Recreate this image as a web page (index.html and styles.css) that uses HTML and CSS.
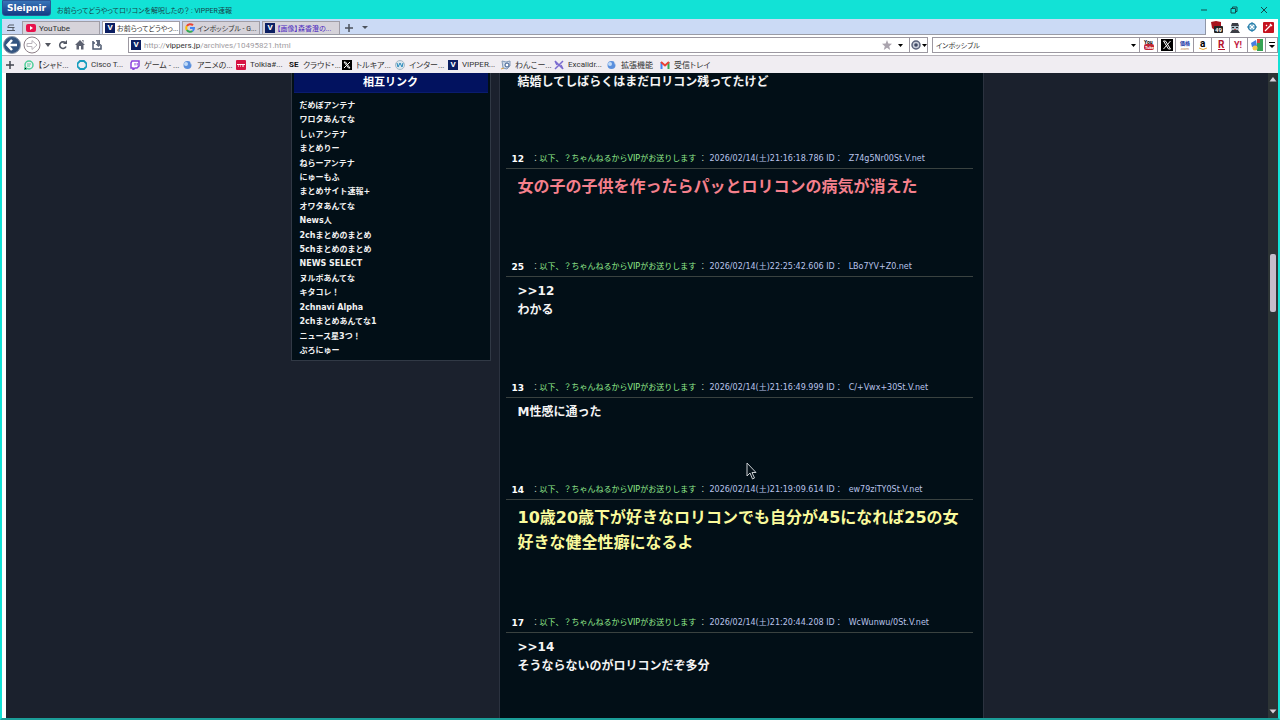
FILE: index.html
```html
<!DOCTYPE html>
<html lang="ja">
<head>
  <meta charset="UTF-8" />
  <meta name="viewport" content="width=device-width, initial-scale=1.0"/>
  <title>お前らってどうやってロリコンを解呪したの？ : VIPPER速報</title>
  <link rel="stylesheet" href="styles.css">
</head>
<body>

<div class="window">
  <header class="titlebar">
    <button class="brand">Sleipnir</button>
    <span class="window-title">お前らってどうやってロリコンを解呪したの？ : VIPPER速報</span>
    <div class="window-buttons">
      <button aria-label="最小化"><svg width="10" height="10" viewBox="0 0 10 10"><path d="M2 5h6"/></svg></button>
      <button aria-label="元に戻す"><svg width="10" height="10" viewBox="0 0 10 10"><path d="M2 3.5h4.500v4.500H2zM3.500 3.500V2H8v4.500H6.500"/></svg></button>
      <button aria-label="閉じる"><svg width="10" height="10" viewBox="0 0 10 10"><path d="M2 2l6 6M8 2l-6 6"/></svg></button>
    </div>
  </header>

  <div class="tabbar">
    <nav class="tabs">
      <button class="tab-list" aria-label="タブ一覧"><svg width="10" height="10" viewBox="0 0 10 10"><path d="M3 2h5M2 4.500h6.500M1 7.500h8M3 2L1.500 4.500M7 4.500v3" stroke="#555b66" fill="none"/></svg></button>
      <button class="tab">
        <svg width="12" height="10" viewBox="0 0 12 10"><rect x="1" y="1" width="10" height="8" rx="2" fill="#e8114b"/><path d="M5 3l3 2-3 2z" fill="#fff"/></svg>
        <span class="latin">YouTube</span>
      </button>
      <button class="tab active"><i class="v-icon">V</i><span>お前らってどうやっ...</span></button>
      <button class="tab">
        <svg width="10" height="10" viewBox="0 0 10 10" fill="none" stroke-width="2"><path d="M8 2.300A4 4 0 0 0 1.800 3" stroke="#ea4335"/><path d="M1.800 3a4 4 0 0 0 0 4" stroke="#fbbc05"/><path d="M1.800 7A4 4 0 0 0 7.500 8" stroke="#34a853"/><path d="M7.500 8A4 4 0 0 0 9 5H5" stroke="#4285f4"/></svg>
        <span>インポッシブル - G...</span>
      </button>
      <button class="tab unread"><i class="v-icon">V</i><span>【画像】森香澄の...</span></button>
      <button class="tab-new" aria-label="新しいタブ"><svg width="10" height="10" viewBox="0 0 10 10"><path d="M5 1v8M1 5h8" stroke="#4c525c" stroke-width="1.500"/></svg></button>
      <button class="tab-menu" aria-label="タブメニュー"><svg width="6" height="4" viewBox="0 0 6 4"><path d="M0 0h6L3 3z" fill="#4c525c"/></svg></button>
    </nav>
    <div class="extensions">
      <button aria-label="ブロッカー"><svg width="14" height="14" viewBox="0 0 14 14"><path d="M1 2l5-1 5 1v5L6 11 2 8z" fill="#a8121d"/><rect x="4" y="6" width="9" height="7" rx="1" fill="#222"/><text x="5" y="12" font-size="6" font-weight="bold" fill="#fff">49</text></svg></button>
      <button aria-label="エージェント"><svg width="10" height="11" viewBox="0 0 10 11"><path d="M2 1h6l1 3H1z" fill="#3b3e45"/><path d="M1 4h8v3L7 9H3L1 7z" fill="#a9bcc6"/><path d="M2 5h2v1H2zM6 5h2v1H6z" fill="#222"/><path d="M4 7h2v1H4z" fill="#c74949"/><path d="M0 11l2-3h6l2 3z" fill="#3b3e45"/></svg></button>
      <button aria-label="ターゲット"><svg width="10" height="10" viewBox="0 0 10 10"><circle cx="5" cy="5" r="3.500" fill="none" stroke="#2e83ad" stroke-width="1.500"/><path d="M5 0v4M5 6v4M0 5h4M6 5h4" stroke="#2e83ad"/></svg></button>
      <button aria-label="ツール"><svg width="11" height="11" viewBox="0 0 11 11"><rect width="11" height="11" rx="1" fill="#c5131f"/><path d="M2 9l6-6M7 2l2 2M3 3l1 1" stroke="#fff" stroke-width="1.300"/></svg></button>
    </div>
  </div>

  <div class="toolbar">
    <div class="nav-buttons">
      <button aria-label="戻る"><svg width="18" height="18" viewBox="0 0 18 18"><circle cx="9" cy="9" r="8.500" fill="#345580" stroke="#8f9bad"/><path d="M9 4L4.500 9 9 14M5 9h9" stroke="#fff" stroke-width="2.500" fill="none"/></svg></button>
      <button aria-label="進む"><svg width="18" height="18" viewBox="0 0 18 18"><circle cx="9" cy="9" r="8" fill="#fff" stroke="#8d7f88"/><path d="M4 7.500h5V4.500l5 4.500-5 4.500v-3H4z" fill="#fff" stroke="#b9b3bb"/></svg></button>
      <button class="history" aria-label="履歴"><svg width="6" height="4" viewBox="0 0 6 4"><path d="M0 0h6L3 4z" fill="#53565f"/></svg></button>
      <button class="tool" aria-label="更新"><svg width="10" height="10" viewBox="0 0 10 10"><path d="M7.500 3A3.300 3.300 0 1 0 8 6.500" fill="none" stroke="#555a66" stroke-width="1.600"/><path d="M5 4h4V0z" fill="#555a66"/></svg></button>
      <button class="tool" aria-label="ホーム"><svg width="10" height="10" viewBox="0 0 10 10"><path d="M5 0l5 5H8.500v4.500H6V6H4v3.500H1.500V5H0zM7 0h1.500v3z" fill="#5c6170"/></svg></button>
      <button class="tool" aria-label="保存"><svg width="10" height="10" viewBox="0 0 10 10"><path d="M1 1v8h8V5M1 3h2" fill="none" stroke="#4e5a70" stroke-width="1.500"/><path d="M4 0h4v4h1.500L6.500 7 3.500 4H5V1.500H4z" fill="#5f687b"/></svg></button>
    </div>
    <div class="address">
      <i class="v-icon">V</i>
      <a class="url" href="#">http://<b>vippers.jp</b>/archives/10495821.html</a>
      <button aria-label="ブックマーク"><svg width="10" height="10" viewBox="0 0 10 10"><path d="M5 0l1.300 3.500L10 3.800 7.200 6.200 8.200 10 5 7.800 1.800 10l1-3.800L0 3.800l3.700-.3z" fill="#aaa4ae"/></svg></button>
      <button aria-label="履歴を表示"><svg width="5" height="3" viewBox="0 0 5 3"><path d="M0 0h5L2.500 3z"/></svg></button>
      <button class="engine" aria-label="エンジン切替"><svg width="16" height="10" viewBox="0 0 16 10"><circle cx="5" cy="5" r="4" fill="#c9ced9" stroke="#59617a" stroke-width="1.500"/><circle cx="5" cy="5" r="1.800" fill="#3f4964"/><path d="M11 4h5l-2.500 3z"/></svg></button>
    </div>
    <div class="search">
      <input type="text" aria-label="検索" value="インポッシブル">
      <button aria-label="検索履歴"><svg width="5" height="3" viewBox="0 0 5 3"><path d="M0 0h5L2.500 3z"/></svg></button>
    </div>
    <div class="engines">
      <button aria-label="YouTube検索"><svg width="12" height="12" viewBox="0 0 12 12"><text x="1" y="5" font-size="5" font-weight="bold">You</text><rect x="1" y="5" width="10" height="6" rx="2" fill="#c32634"/><text x="2" y="10" font-size="4" font-weight="bold" fill="#fff">Tube</text></svg></button>
      <button aria-label="X検索"><svg width="12" height="12" viewBox="0 0 12 12"><rect width="12" height="12"/><path d="M2.500 2h2l5 8h-2zM9.500 2l-7 8" fill="none" stroke="#fff"/></svg></button>
      <button aria-label="価格.com検索"><svg width="12" height="12" viewBox="0 0 12 12"><text x="1" y="6" font-size="5" font-weight="bold" fill="#1b35a5">価格</text><text x="1" y="11" font-size="4" fill="#c07d45">.com</text></svg></button>
      <button aria-label="Amazon検索"><svg width="12" height="12" viewBox="0 0 12 12"><text x="3" y="8" font-size="10" font-weight="bold">a</text><path d="M2 9q4 3 8 0" fill="none" stroke="#e8a735"/></svg></button>
      <button aria-label="楽天検索"><svg width="12" height="12" viewBox="0 0 12 12"><text x="3" y="9" font-size="10" font-weight="bold" fill="#b4132d">R</text><path d="M3 10.500h7" stroke="#b4132d"/></svg></button>
      <button aria-label="Yahoo検索"><svg width="12" height="12" viewBox="0 0 12 12"><text x="1" y="9" font-size="9" font-weight="bold" fill="#c21940">Y!</text></svg></button>
      <button aria-label="Googleマップ検索"><svg width="12" height="12" viewBox="0 0 12 12"><path d="M6 0h6v12H6z" fill="#36a354"/><path d="M0 4l5-3 1 6-5 1z" fill="#477ee0"/><path d="M6 0h3v4H6z" fill="#d8463c"/><circle cx="4" cy="9" r="2.500" fill="#f1c84b"/></svg></button>
      <button class="more" aria-label="その他"><svg width="6" height="7" viewBox="0 0 6 7"><path d="M0 0h6v1H0zM0 3h6L3 6z"/></svg></button>
    </div>
  </div>

  <nav class="bookmarks">
    <button aria-label="追加"><svg width="10" height="10" viewBox="0 0 10 10"><path d="M5 1v8M1 5h8" stroke="#42464f" stroke-width="1.500"/></svg></button>
    <a href="#"><svg width="10" height="10" viewBox="0 0 10 10"><circle cx="5" cy="5" r="4" fill="none" stroke="#4dcf99" stroke-width="1.500"/><path d="M3 4h4M3 6h3M0 10l1-3 2 2z" stroke="#4dcf99"/></svg>【シャド...</a>
    <a href="#"><svg width="10" height="10" viewBox="0 0 10 10"><path d="M3 1h4l2.500 2.500v3L7 9H3L.5 6.500v-3z" fill="none" stroke="#179dbe" stroke-width="1.800"/></svg>Cisco T...</a>
    <a href="#"><svg width="10" height="10" viewBox="0 0 10 10"><path d="M2 1h7v5L7 8H5L3 10V8H1V3z" fill="#fff" stroke="#8d45dd" stroke-width="1.500"/><path d="M5 3v2.500M7.200 3v2.500" stroke="#8d45dd"/></svg>ゲーム - ...</a>
    <a href="#"><svg width="10" height="10" viewBox="0 0 10 10"><circle cx="4.500" cy="5" r="4" fill="#5a8fdd"/><circle cx="3" cy="4" r="2" fill="#c2dbf7"/><path d="M7 1l2 2-1 2z" fill="#eee"/></svg>アニメの...</a>
    <a href="#"><svg width="10" height="10" viewBox="0 0 10 10"><rect width="10" height="10" rx="1" fill="#d61443"/><path d="M1 4.500h8M2 6h1M4 6h1M6 6h2" stroke="#fff"/></svg>Tolkia#...</a>
    <a href="#"><b class="se-icon">SE</b>クラウド・...</a>
    <a href="#"><svg width="10" height="10" viewBox="0 0 10 10"><rect width="10" height="10"/><path d="M2 2h1.500l4.500 6H6.500zM8 2L2 8" fill="none" stroke="#fff"/></svg>トルキア...</a>
    <a href="#"><svg width="10" height="10" viewBox="0 0 10 10"><circle cx="5" cy="5" r="4.500" fill="#d8e6ee" stroke="#a8b9c5"/><path d="M2 3l1 4 2-4 2 4 1-4" fill="none" stroke="#2889bb"/></svg>インター...</a>
    <a href="#"><i class="v-icon">V</i>VIPPER...</a>
    <a href="#"><svg width="10" height="10" viewBox="0 0 10 10"><path d="M1 1l4 1 4-1v5L6 9 2 8z" fill="#ccd9e9" stroke="#839ab8"/><circle cx="6" cy="5" r="2" fill="#fff" stroke="#38588d"/><path d="M0 9l3-1" stroke="#dba34a"/></svg>わんこー...</a>
    <a href="#"><svg width="10" height="10" viewBox="0 0 10 10"><path d="M1 1l8 8M9 1L1 9M1 1l2 4M9 9L7 5" stroke="#7a6bd0" stroke-width="1.500"/></svg>Excalidr...</a>
    <a href="#"><svg width="10" height="10" viewBox="0 0 10 10"><circle cx="4.500" cy="5" r="4" fill="#5a8fdd"/><circle cx="3" cy="4" r="2" fill="#c2dbf7"/><path d="M7 1l2 2-1 2z" fill="#eee"/></svg>拡張機能</a>
    <a href="#"><svg width="10" height="10" viewBox="0 0 10 10" fill="none" stroke-width="2"><path d="M1.500 9V2" stroke="#4285f4"/><path d="M8.500 9V2" stroke="#34a853"/><path d="M1 2l4 3.500L9 2" stroke="#ea4335"/></svg>受信トレイ</a>
  </nav>

  <div class="viewport">
    <div class="page">
      <aside class="sidebar">
        <h2>相互リンク</h2>
        <ul>
          <li><a href="#">だめぽアンテナ</a></li>
          <li><a href="#">ワロタあんてな</a></li>
          <li><a href="#">しぃアンテナ</a></li>
          <li><a href="#">まとめりー</a></li>
          <li><a href="#">ねらーアンテナ</a></li>
          <li><a href="#">にゅーもふ</a></li>
          <li><a href="#">まとめサイト速報+</a></li>
          <li><a href="#">オワタあんてな</a></li>
          <li><a href="#">News人</a></li>
          <li><a href="#">2chまとめのまとめ</a></li>
          <li><a href="#">5chまとめのまとめ</a></li>
          <li><a href="#">NEWS SELECT</a></li>
          <li><a href="#">ヌルポあんてな</a></li>
          <li><a href="#">キタコレ！</a></li>
          <li><a href="#">2chnavi Alpha</a></li>
          <li><a href="#">2chまとめあんてな1</a></li>
          <li><a href="#">ニュース星3つ！</a></li>
          <li><a href="#">ぷろにゅー</a></li>
        </ul>
      </aside>

      <main class="thread">
        <article class="post">
          <p>結婚してしばらくはまだロリコン残ってたけど</p>
        </article>
        <article class="post">
          <div class="meta"><b>12</b><span class="name">：<em>以下、？ちゃんねるからVIPがお送りします</em> ：</span><span>2026/02/14(土)21:16:18.786 ID：</span><span class="id">Z74g5Nr00St.V.net</span></div>
          <p class="big red">女の子の子供を作ったらパッとロリコンの病気が消えた</p>
        </article>
        <article class="post">
          <div class="meta"><b>25</b><span class="name">：<em>以下、？ちゃんねるからVIPがお送りします</em> ：</span><span>2026/02/14(土)22:25:42.606 ID：</span><span class="id">LBo7YV+Z0.net</span></div>
          <p>&gt;&gt;12<br>わかる</p>
        </article>
        <article class="post">
          <div class="meta"><b>13</b><span class="name">：<em>以下、？ちゃんねるからVIPがお送りします</em> ：</span><span>2026/02/14(土)21:16:49.999 ID：</span><span class="id">C/+Vwx+30St.V.net</span></div>
          <p>M性感に通った</p>
        </article>
        <article class="post">
          <div class="meta"><b>14</b><span class="name">：<em>以下、？ちゃんねるからVIPがお送りします</em> ：</span><span>2026/02/14(土)21:19:09.614 ID：</span><span class="id">ew79ziTY0St.V.net</span></div>
          <p class="big yellow">10歳20歳下が好きなロリコンでも自分が45になれば25の女<br>好きな健全性癖になるよ</p>
        </article>
        <article class="post">
          <div class="meta"><b>17</b><span class="name">：<em>以下、？ちゃんねるからVIPがお送りします</em> ：</span><span>2026/02/14(土)21:20:44.208 ID：</span><span class="id">WcWunwu/0St.V.net</span></div>
          <p>&gt;&gt;14<br>そうならないのがロリコンだぞ多分</p>
        </article>
      </main>
    </div>

    <div class="scrollbar">
      <svg width="8" height="5" viewBox="0 0 8 5"><path d="M4 0l3.500 4.500h-7z"/></svg>
      <div class="thumb"></div>
      <svg width="8" height="5" viewBox="0 0 8 5"><path d="M4 4.500L.5.500h7z"/></svg>
    </div>
  </div>

  <svg class="cursor" width="12" height="18" viewBox="0 0 12 18"><path d="M1 1v13l3-3 2.500 6 2-1L6 10.500h4z" fill="#06121a" stroke="#c9cdd1"/></svg>
</div>

</body>
</html>
```
FILE: styles.css
```css
* {
  box-sizing: border-box;
}

body {
  margin: 0;
  font-family: Roboto, 'Noto Sans CJK JP', sans-serif;
  font-size: 8px;
  color: #333;
}

button {
  display: flex;
  align-items: center;
  justify-content: center;
  padding: 0;
  border: none;
  background: none;
  font: inherit;
  color: inherit;
}

a {
  color: inherit;
  text-decoration: none;
}

svg {
  display: block;
  flex: none;
}

.window {
  display: flex;
  flex-direction: column;
  height: 100vh;
  overflow: hidden;
  border: 2px solid #12e2d6;
  border-top: none;
  border-bottom-color: #1b9d98;
  background: #fff;
}

/* title bar */
.titlebar {
  display: flex;
  align-items: center;
  gap: 6px;
  height: 19px;
  background: #12e2d6;
}

.brand {
  width: 49px;
  height: 16px;
  align-self: flex-start;
  border: 1px solid #2a5596;
  border-radius: 0 0 3px 3px;
  background: linear-gradient(#3874b8, #123c85);
  color: #fff;
  font-family: 'DejaVu Sans', sans-serif;
  font-size: 9px;
  font-weight: bold;
}

.window-title {
  color: #17424a;
  font-size: 7px;
  font-feature-settings: "palt";
}

.window-buttons {
  display: flex;
  gap: 20px;
  margin-left: auto;
  margin-right: 9px;
}

.window-buttons path {
  fill: none;
  stroke: #134b4d;
}

/* tabs */
.tabbar {
  display: flex;
  height: 16px;
}

.tabs {
  flex: 1;
  display: flex;
  align-items: flex-end;
  gap: 2px;
  background: #cbdaf5;
  border-right: 1px solid #8e96a8;
  border-bottom: 1px solid #9a9ca6;
}

.tab-list {
  width: 18px;
  height: 13px;
}

.tab {
  width: 78px;
  height: 13px;
  justify-content: flex-start;
  gap: 2px;
  padding: 0 2px;
  white-space: nowrap;
  border: 1px solid #a09da6;
  border-bottom: none;
  background: #d6d3da;
  font-size: 7px;
  font-feature-settings: "palt";
}

.tab.active {
  background: #fff;
}

.tab.unread {
  color: #4a27c0;
}

.tab .latin {
  font-size: 8px;
}

.tab-new,
.tab-menu {
  width: 14px;
  height: 13px;
}

.v-icon {
  flex: none;
  width: 10px;
  height: 10px;
  background: #0c1f62;
  color: #fff;
  font-size: 8px;
  font-style: normal;
  font-weight: bold;
  line-height: 10px;
  text-align: center;
}

.extensions {
  display: flex;
  align-items: center;
  justify-content: space-between;
  width: 72px;
  padding: 0 4px;
}

/* toolbar */
.toolbar {
  display: flex;
  align-items: center;
  height: 20px;
}

.nav-buttons {
  display: flex;
  align-items: center;
  gap: 2px;
  width: 126px;
  padding-left: 1px;
}

.history {
  width: 10px;
}

.tool {
  width: 15px;
}

.address,
.search {
  display: flex;
  align-items: center;
  height: 16px;
  border: 1px solid #9c98a1;
}

.address {
  flex: 1;
  gap: 6px;
  padding-left: 2px;
  margin-right: 4px;
}

.address .url {
  flex: 1;
  margin-left: -3px;
  color: #a09ca2;
}

.url b {
  color: #333;
  font-weight: normal;
}

.engine {
  width: 18px;
  height: 14px;
  border-left: 1px solid #9c98a1;
}

.search {
  width: 208px;
  padding-right: 3px;
}

.search input {
  flex: 1;
  min-width: 0;
  padding: 0 3px;
  border: none;
  outline: none;
  background: none;
  font: inherit;
  font-size: 7px;
  font-feature-settings: "palt";
  color: #333;
}

.engines {
  display: flex;
}

.engines button {
  width: 18px;
  height: 16px;
  border: 1px solid #9c98a1;
  border-left: none;
}

.engines .more {
  width: 12px;
}

/* bookmarks */
.bookmarks {
  display: flex;
  align-items: center;
  height: 18px;
  padding-left: 3px;
  border-top: 1px solid #b5b1b9;
  background: #f0edf2;
  font-feature-settings: "palt";
}

.bookmarks button {
  width: 19px;
  justify-content: flex-start;
}

.bookmarks a {
  display: flex;
  align-items: center;
  gap: 4px;
  width: 53px;
  white-space: nowrap;
}

.se-icon {
  width: 10px;
  color: #111;
}

/* page */
.viewport {
  flex: 1;
  display: flex;
  min-height: 0;
  margin-left: 4px;
  background: #1b212d;
  font-family: 'DejaVu Sans', 'Noto Sans CJK JP', sans-serif;
}

.page {
  flex: 1;
  display: flex;
  align-items: flex-start;
  justify-content: center;
  gap: 8px;
  overflow: hidden;
}

.sidebar {
  width: 200px;
  padding: 0 2px 2px;
  border: 1px solid #313945;
  border-top: none;
  background: #020f17;
  color: #f2f2f2;
  font-weight: bold;
}

.sidebar h2 {
  margin: 0;
  border-bottom: 1px solid #0a1c6e;
  background: #02125f;
  color: #fff;
  font-size: 11px;
  line-height: 19px;
  text-align: center;
}

.sidebar ul {
  display: flex;
  flex-direction: column;
  justify-content: space-between;
  height: 259px;
  margin: 6px 0 0;
  padding: 0 6px;
  list-style: none;
  line-height: 14px;
}

.thread {
  width: 485px;
  height: 100%;
  padding: 0 10px 0 6px;
  border: 1px solid #2b323f;
  border-width: 0 1px;
  background: #020f17;
}

.post {
  margin-bottom: 60px;
}

.meta {
  display: flex;
  height: 17px;
  padding-left: 6px;
  border-bottom: 1px solid #3a4240;
  color: #b9c3ea;
  line-height: 14px;
  white-space: nowrap;
}

.meta b {
  width: 20px;
  color: #fff;
  font-size: 9px;
}

.meta .name {
  width: 178px;
  color: #b4c8b4;
}

.meta em {
  color: #93ec8d;
  font-style: normal;
}

.meta .id {
  margin-left: 6px;
}

.post p {
  margin: 0;
  padding-left: 12px;
  color: #f4f4f4;
  font-size: 12px;
  font-weight: bold;
  line-height: 19px;
  white-space: nowrap;
}

.meta + p {
  margin: 5px 0 61px;
}

.post .big {
  font-size: 16px;
  line-height: 25px;
}

.post .red {
  color: #f5808c;
}

.post .yellow {
  color: #fafa9c;
}

.scrollbar {
  position: relative;
  display: flex;
  flex-direction: column;
  align-items: center;
  justify-content: space-between;
  width: 10px;
  padding: 4px 0;
  background: #2d3435;
}

.scrollbar path {
  fill: #d6d1da;
}

.thumb {
  position: absolute;
  top: 28%;
  width: 6px;
  height: 58px;
  border-radius: 2px;
  background: #c4bdca;
}

.cursor {
  position: absolute;
  left: 746px;
  top: 462px;
}
```
